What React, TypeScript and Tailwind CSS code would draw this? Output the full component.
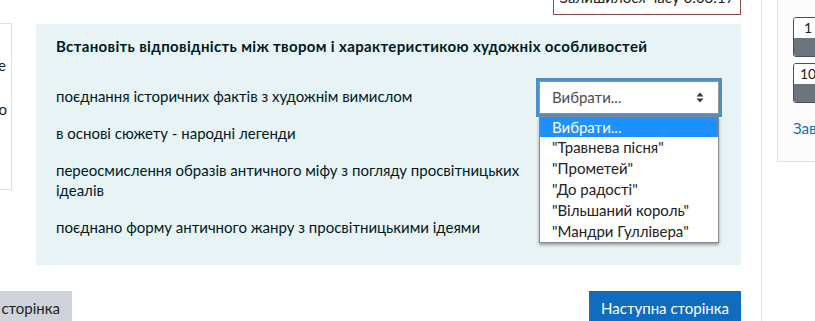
const ROWS = [
  "поєднання історичних фактів з художнім вимислом",
  "в основі сюжету - народні легенди",
  "переосмислення образів античного міфу з погляду просвітницьких ідеалів",
  "поєднано форму античного жанру з просвітницькими ідеями",
];

const OPTIONS = [
  "Вибрати...",
  "\"Травнева пісня\"",
  "\"Прометей\"",
  "\"До радості\"",
  "\"Вільшаний король\"",
  "\"Мандри Гуллівера\"",
];

function Caret() {
  return (
    <svg width="8" height="11" viewBox="0 0 8 11" className="shrink-0">
      <path d="M4 0.5 L7.5 4.5 H0.5 Z" fill="#343a40" />
      <path d="M4 10.5 L7.5 6.5 H0.5 Z" fill="#343a40" />
    </svg>
  );
}

function FakeSelect({ open }: { open?: boolean }) {
  return (
    <div
      className={
        open
          ? "relative z-20 h-[33px] w-[180px] bg-white border border-[#8f959e] shadow-[0_0_0_3px_#4f8fc6] flex items-center justify-between pl-[12px] pr-[14px]"
          : "relative z-0 h-[33px] w-[180px] bg-white border border-[#8f959e] flex items-center justify-between pl-[12px] pr-[14px]"
      }
    >
      <span className="text-[#495057]">Вибрати...</span>
      <Caret />
      {open && (
        <ul className="absolute left-[-1px] top-[calc(100%+3px)] w-[180px] bg-white border border-[#8a8a8a] shadow-[0_2px_3px_rgba(0,0,0,0.35)] leading-[21px] text-[#222]">
          {OPTIONS.map((o, i) => (
            <li
              key={o}
              className={i === 0 ? "bg-[#1e90ff] text-white pl-[12px] h-[20px] leading-[20px]" : "pl-[12px]"}
            >
              {o}
            </li>
          ))}
        </ul>
      )}
    </div>
  );
}

export default function App() {
  return (
    <div className="w-[815px] h-[321px] overflow-hidden bg-white flex font-['Lato','Open_Sans',sans-serif] text-[15px] text-[#1d2125]">
      {/* Main column */}
      <div className="w-[741px] shrink-0 flex flex-col">
        {/* Timer */}
        <div className="flex justify-end">
          <div className="-mt-[15px] w-[188px] border border-[#8f4a4a] pt-[1px] pb-[7px] leading-[20px] text-center text-[#1d2125]">
            Залишилося часу 0:03:17
          </div>
        </div>

        <div className="flex mt-[9px]">
          {/* Question info card (cut off on the left) */}
          <div className="w-[12px] h-[167px] -mt-[1px] bg-white border border-l-0 border-[#dee2e6] overflow-hidden shrink-0">
            <div className="flex justify-end whitespace-nowrap mt-[31px] pr-[5px] leading-[20px]">Ще не відповіли на це</div>
            <div className="flex justify-end whitespace-nowrap mt-[24px] pr-[4px] leading-[20px]">Макс. оцінка до 4,00 з 4,00 бало</div>
          </div>

          {/* Formulation */}
          <div className="ml-[24px] w-[705px] bg-[#e7f3f5] text-[#001a1e] px-[20px] pt-[12px] pb-[20px]">
            <p className="font-bold leading-[20px] tracking-[0.35px]">
              Встановіть відповідність між твором і характеристикою художніх особливостей
            </p>
            <div className="mt-[21px] flex flex-col">
              {ROWS.map((r, i) => (
                <div key={r} className="grid grid-cols-[472px_180px] gap-x-[11px] items-center">
                  <div className="py-[8.5px] leading-[20px]">{r}</div>
                  <div className={i === 0 ? "mt-[4px]" : ""}>
                    <FakeSelect open={i === 0} />
                  </div>
                </div>
              ))}
            </div>
          </div>
        </div>

        {/* Submit buttons */}
        <div className="mt-[26px] flex justify-between">
          <div className="w-[72px] flex justify-end overflow-hidden">
            <span className="shrink-0 whitespace-nowrap bg-[#ced4da] text-[#1d2125] h-[36px] pl-[12px] pr-[12px] pt-[6px] leading-[22px]">
              Попередня сторінка
            </span>
          </div>
          <span className="bg-[#0f6cbf] text-white h-[36px] px-[12px] pt-[6px] leading-[22px] whitespace-nowrap">
            Наступна сторінка
          </span>
        </div>
      </div>

      {/* Right drawer */}
      <div className="ml-[20px] border-l border-[#dee2e6] pl-[15px] flex-1">
        <div className="w-[60px] h-[172px] -mt-[10px] bg-[#fcfcfc] border border-r-0 border-[#dee2e6] pl-[15px] pt-[26px]">
          <div className="flex flex-col gap-[6px]">
            {["1", "10"].map((n) => (
              <div key={n} className="w-[30px] h-[40px] border border-[#495057] rounded-[3px] overflow-hidden flex flex-col">
                <div className="h-[20px] bg-white text-[14px] leading-[20px] text-center text-[#1d2125]">{n}</div>
                <div className="flex-1 bg-[#6c757d]" />
              </div>
            ))}
          </div>
          <div className="mt-[15px] text-[#0f6cbf] leading-[20px] whitespace-nowrap">Завершити спробу...</div>
        </div>
      </div>
    </div>
  );
}
